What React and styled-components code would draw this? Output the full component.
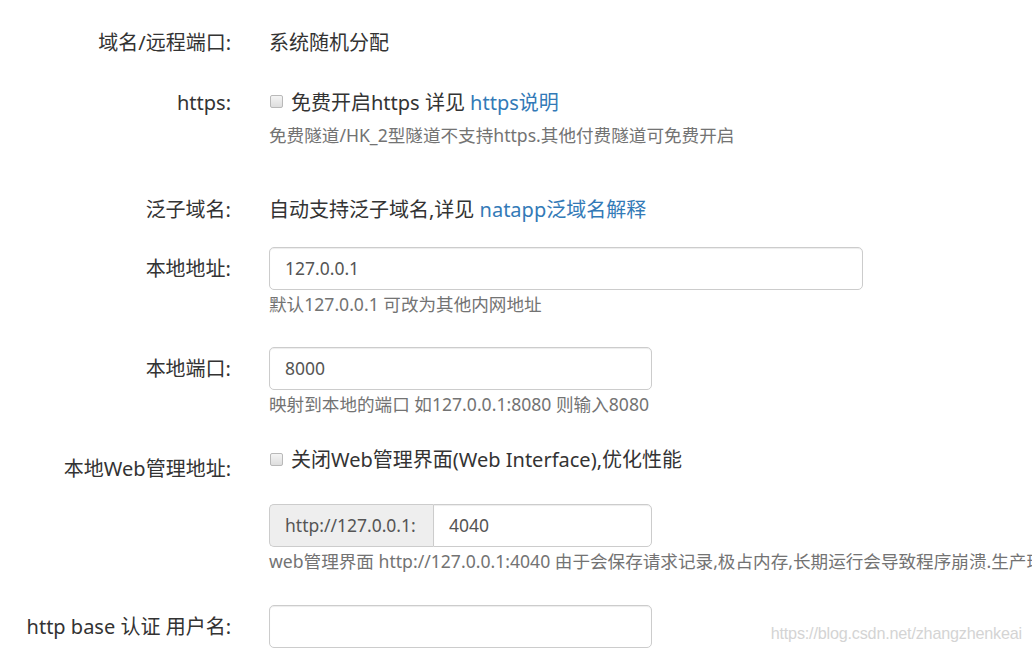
import React from "react";
import styled, { createGlobalStyle } from "styled-components";

const Global = createGlobalStyle`
  html, body { margin: 0; padding: 0; background: #fff; }
  body { overflow: hidden; }
`;

const Page = styled.div`
  position: relative;
  width: 1032px;
  height: 654px;
  overflow: hidden;
  padding-top: 20.5px;
  box-sizing: border-box;
  font-family: "Noto Sans", "Noto Sans CJK SC", sans-serif;
  color: #333;
`;

const Row = styled.div`
  display: grid;
  grid-template-columns: 231px 1fr;
  column-gap: 38px;
  align-items: start;
  margin-bottom: ${(p) => p.$mb || 0}px;
`;

const Label = styled.div`
  text-align: right;
  font-size: 20px;
  line-height: 43px;
  height: 43px;
  white-space: nowrap;
  color: #333;
`;

const Control = styled.div`
  display: flex;
  flex-direction: column;
  align-items: flex-start;
  min-width: 0;
`;

const Static = styled.div`
  font-size: 20px;
  line-height: 43px;
  height: 43px;
  white-space: nowrap;
`;

const Link = styled.a`
  color: #337ab7;
  text-decoration: none;
`;

const CheckLine = styled.label`
  display: flex;
  align-items: center;
  gap: 8px;
  font-size: 20px;
  height: ${(p) => p.$h || 43}px;
  line-height: ${(p) => p.$h || 43}px;
  margin-top: ${(p) => p.$mt || 0}px;
  white-space: nowrap;
  padding-left: 1px;
`;

const Box = styled.span`
  display: inline-block;
  width: 13px;
  height: 13px;
  box-sizing: border-box;
  border: 1px solid #b9b9b9;
  border-radius: 2px;
  background: linear-gradient(#f4f4f4, #dedede);
  margin-top: ${(p) => p.$up || 0}px;
  flex: none;
`;

const Help = styled.div`
  font-size: 17.6px;
  line-height: 25px;
  color: #737373;
  margin-top: ${(p) => (p.$mt === undefined ? 1.5 : p.$mt)}px;
  white-space: nowrap;
`;

const Input = styled.div`
  box-sizing: border-box;
  width: ${(p) => p.$w}px;
  height: 43px;
  border: 1px solid #ccc;
  border-radius: 5px;
  padding: 0 15px;
  font-size: 17.5px;
  line-height: 41px;
  color: #555;
  background: #fff;
  box-shadow: inset 0 1px 1px rgba(0, 0, 0, 0.075);
`;

const Group = styled.div`
  display: flex;
  width: 383px;
  height: 43px;
  margin-top: ${(p) => p.$mt || 0}px;
`;

const Addon = styled.div`
  box-sizing: border-box;
  width: 164px;
  height: 43px;
  border: 1px solid #ccc;
  border-right: none;
  border-radius: 5px 0 0 5px;
  background: #eee;
  padding: 0 15px;
  font-size: 17.5px;
  line-height: 41px;
  color: #555;
  white-space: nowrap;
`;

const GroupInput = styled(Input)`
  flex: 1;
  border-radius: 0 5px 5px 0;
`;

const Watermark = styled.div`
  position: absolute;
  right: 10px;
  top: 624px;
  font-family: "Liberation Sans", Arial, sans-serif;
  font-size: 16.2px;
  color: #d4d4d4;
  letter-spacing: -0.2px;
`;

export default function App() {
  return (
    <Page>
      <Global />
      <Row $mb={17}>
        <Label>域名/远程端口:</Label>
        <Control>
          <Static>系统随机分配</Static>
        </Control>
      </Row>
      <Row $mb={40}>
        <Label>https:</Label>
        <Control>
          <CheckLine>
            <Box $up={-2} />
            <span>
              免费开启https 详见 <Link href="#">https说明</Link>
            </span>
          </CheckLine>
          <Help $mt={-1}>免费隧道/HK_2型隧道不支持https.其他付费隧道可免费开启</Help>
        </Control>
      </Row>
      <Row $mb={16.5}>
        <Label>泛子域名:</Label>
        <Control>
          <Static>
            自动支持泛子域名,详见 <Link href="#">natapp泛域名解释</Link>
          </Static>
        </Control>
      </Row>
      <Row $mb={30.5}>
        <Label>本地地址:</Label>
        <Control>
          <Input $w={594}>127.0.0.1</Input>
          <Help>默认127.0.0.1 可改为其他内网地址</Help>
        </Control>
      </Row>
      <Row $mb={30.5}>
        <Label>本地端口:</Label>
        <Control>
          <Input $w={383}>8000</Input>
          <Help>映射到本地的端口 如127.0.0.1:8080 则输入8080</Help>
        </Control>
      </Row>
      <Row $mb={31.5}>
        <Label>本地Web管理地址:</Label>
        <Control>
          <CheckLine $h={30} $mt={-2}>
            <Box $up={-2} />
            <span>关闭Web管理界面(Web Interface),优化性能</span>
          </CheckLine>
          <Group $mt={29}>
            <Addon>http://127.0.0.1:</Addon>
            <GroupInput>4040</GroupInput>
          </Group>
          <Help>
            web管理界面 http://127.0.0.1:4040 由于会保存请求记录,极占内存,长期运行会导致程序崩溃.生产环境建议关闭
          </Help>
        </Control>
      </Row>
      <Row>
        <Label>http base 认证 用户名:</Label>
        <Control>
          <Input $w={383} />
        </Control>
      </Row>
      <Watermark>https://blog.csdn.net/zhangzhenkeai</Watermark>
    </Page>
  );
}
